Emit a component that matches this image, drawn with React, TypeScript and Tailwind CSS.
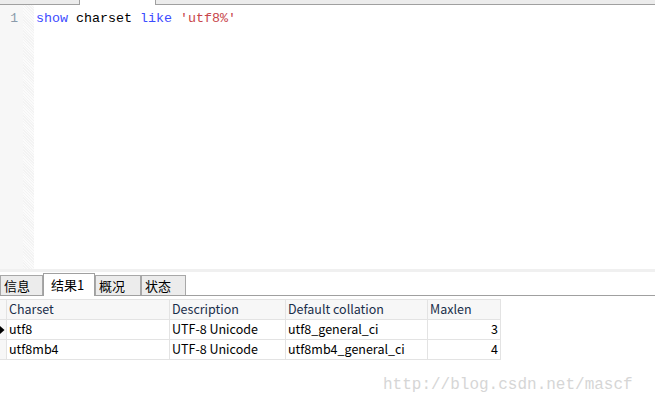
import React from "react";

const cols = "grid grid-cols-[7px_163px_116px_142px_73px] w-[501px]";
const cell = "h-[20px] flex items-center px-[2px] border-r border-b border-[#e3e3e3] whitespace-nowrap";

const rows = [
  { charset: "utf8", desc: "UTF-8 Unicode", coll: "utf8_general_ci", max: "3", current: true },
  { charset: "utf8mb4", desc: "UTF-8 Unicode", coll: "utf8mb4_general_ci", max: "4", current: false },
];

const tabs = [
  { label: "信息", w: "w-[43px]" },
  { label: "结果1", w: "w-[52px]", active: true },
  { label: "概况", w: "w-[46px]" },
  { label: "状态", w: "w-[45px]" },
];

export default function App() {
  return (
    <div
      className="w-[655px] h-[406px] bg-white relative overflow-hidden flex flex-col"
      style={{ fontFamily: '"Noto Sans CJK SC", "Liberation Sans", sans-serif' }}
    >
      {/* top tab remnants */}
      <div className="flex h-[5px] shrink-0">
        <div className="w-[80px] bg-[#ececec] border-b border-r border-[#a0a0a0]" />
        <div className="w-[75px] bg-white" />
        <div className="flex-1 bg-[#ececec] border-b border-l border-[#a0a0a0]" />
      </div>

      {/* editor */}
      <div className="flex h-[264px] shrink-0">
        <div className="w-[23px] bg-[#f7f7f7] flex justify-end pr-[5px] pt-[6px]">
          <span className="text-[13px] leading-[16px] text-[#8b9bab] font-['Liberation_Mono',monospace]">1</span>
        </div>
        <div className="w-[11px] bg-[repeating-linear-gradient(45deg,#f3f3f3_0px,#f3f3f3_1px,#fbfbfb_1px,#fbfbfb_2px)]" />
        <div className="flex-1 pl-[2px] pt-[6px] font-['Liberation_Mono',monospace] text-[13.33px] leading-[16px]">
          <span className="text-[#3c4cff]">show</span>
          <span className="text-black"> charset </span>
          <span className="text-[#3c4cff]">like</span>
          <span className="text-black"> </span>
          <span className="text-[#c8464b]">'utf8%'</span>
        </div>
      </div>
      <div className="h-[3px] bg-[#f0f0f0] shrink-0" />
      <div className="h-[2px] shrink-0" />

      {/* result tabs */}
      <div className="flex items-end h-[22px] border-b border-[#a0a0a0] shrink-0">
        {tabs.map((t) =>
          t.active ? (
            <div
              key={t.label}
              className={`${t.w} h-[23px] -mb-px bg-white border border-b-0 border-[#a0a0a0] flex items-center pl-[7px] text-[13px] text-black`}
            >
              {t.label}
            </div>
          ) : (
            <div
              key={t.label}
              className={`${t.w} h-[20px] bg-[#ececec] border border-b-0 border-[#a8a8a8] flex items-center pl-[3px] text-[13px] text-black`}
            >
              {t.label}
            </div>
          )
        )}
      </div>

      {/* result grid */}
      <div className="pt-[3px] text-[12.5px] text-black">
        <div className={`${cols} bg-[#f7f7f7] border-t border-[#e3e3e3]`}>
          <div className={cell} />
          <div className={`${cell} text-[#1a2e4a]`}>Charset</div>
          <div className={`${cell} text-[#1a2e4a]`}>Description</div>
          <div className={`${cell} text-[#1a2e4a]`}>Default collation</div>
          <div className={`${cell} text-[#1a2e4a]`}>Maxlen</div>
        </div>
        {rows.map((r) => (
          <div key={r.charset} className={cols}>
            <div className="h-[20px] flex items-center border-r border-b border-[#e3e3e3] bg-[#f7f7f7]">
              {r.current && (
                <svg width="5" height="8" viewBox="0 0 5 8" className="block shrink-0">
                  <path d="M0 0L4.5 4L0 8Z" fill="#000" />
                </svg>
              )}
            </div>
            <div className={cell}>{r.charset}</div>
            <div className={cell}>{r.desc}</div>
            <div className={cell}>{r.coll}</div>
            <div className={`${cell} justify-end`}>{r.max}</div>
          </div>
        ))}
      </div>

      {/* watermark */}
      <div className="absolute left-[383px] top-[375px] text-[16px] leading-[20px] text-[#d6d6d6] font-['Liberation_Mono',monospace]">
        http://blog.csdn.net/mascf
      </div>
    </div>
  );
}
